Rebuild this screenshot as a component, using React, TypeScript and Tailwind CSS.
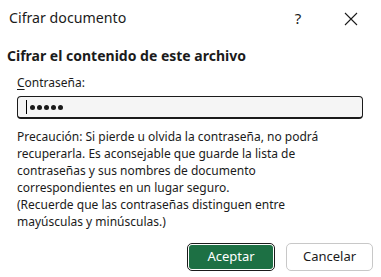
import React from "react";

export default function App() {
  const font = { fontFamily: '"Noto Sans", "Open Sans", sans-serif' };
  return (
    <div className="w-[381px] h-[277px] bg-white overflow-hidden relative text-[#1b1b1b]" style={font}>
      <div className="flex items-center h-[36px] pl-[9px]">
        <div className="text-[14.2px] leading-none flex-1 text-[#1b1b1b]">Cifrar documento</div>
        <div className="w-[20px] text-center text-[15px] leading-none mr-[36px]">?</div>
        <svg width="14" height="14" viewBox="0 0 14 14" className="mr-[23px] mt-[2px]">
          <path d="M1 1 L13 13 M13 1 L1 13" stroke="#1b1b1b" strokeWidth="1.1" fill="none" />
        </svg>
      </div>
      <div className="pl-[7px] pt-[10px] text-[14px] font-bold leading-[20px]">Cifrar el contenido de este archivo</div>
      <div className="pl-[17px] pr-[18px] pt-[9px]">
        <div className="text-[12px] leading-[16px]"><span className="underline underline-offset-2">C</span>ontraseña:</div>
        <div className="mt-[5px] h-[23px] rounded-[4px] border border-[#1b1b1b] border-b-2 bg-[#f5f5f5] flex items-center pl-[8px] gap-[2px]">
          <div className="w-[1px] h-[14px] bg-black mr-[1px]" />
          {[0, 1, 2, 3, 4].map((i) => (
            <div key={i} className="w-[5px] h-[5px] rounded-full bg-[#1b1b1b]" />
          ))}
        </div>
        <div className="mt-[9px] text-[12px] leading-[17px] text-[#1b1b1b]">
          Precaución: Si pierde u olvida la contraseña, no podrá<br />
          recuperarla. Es aconsejable que guarde la lista de<br />
          contraseñas y sus nombres de documento<br />
          correspondientes en un lugar seguro.<br />
          (Recuerde que las contraseñas distinguen entre<br />
          mayúsculas y minúsculas.)
        </div>
      </div>
      <div className="flex justify-end gap-[11px] pr-[8px] mt-[13px]">
        <div className="w-[88px] h-[28px] rounded-[5px] border border-[#1b1b1b] p-[1px]">
          <div className="w-full h-full rounded-[3px] bg-[#1d7044] text-white text-[13px] flex items-center justify-center">Aceptar</div>
        </div>
        <div className="w-[87px] h-[28px] rounded-[5px] border border-[#c8c8c8] bg-white text-[13px] flex items-center justify-center">Cancelar</div>
      </div>
    </div>
  );
}
